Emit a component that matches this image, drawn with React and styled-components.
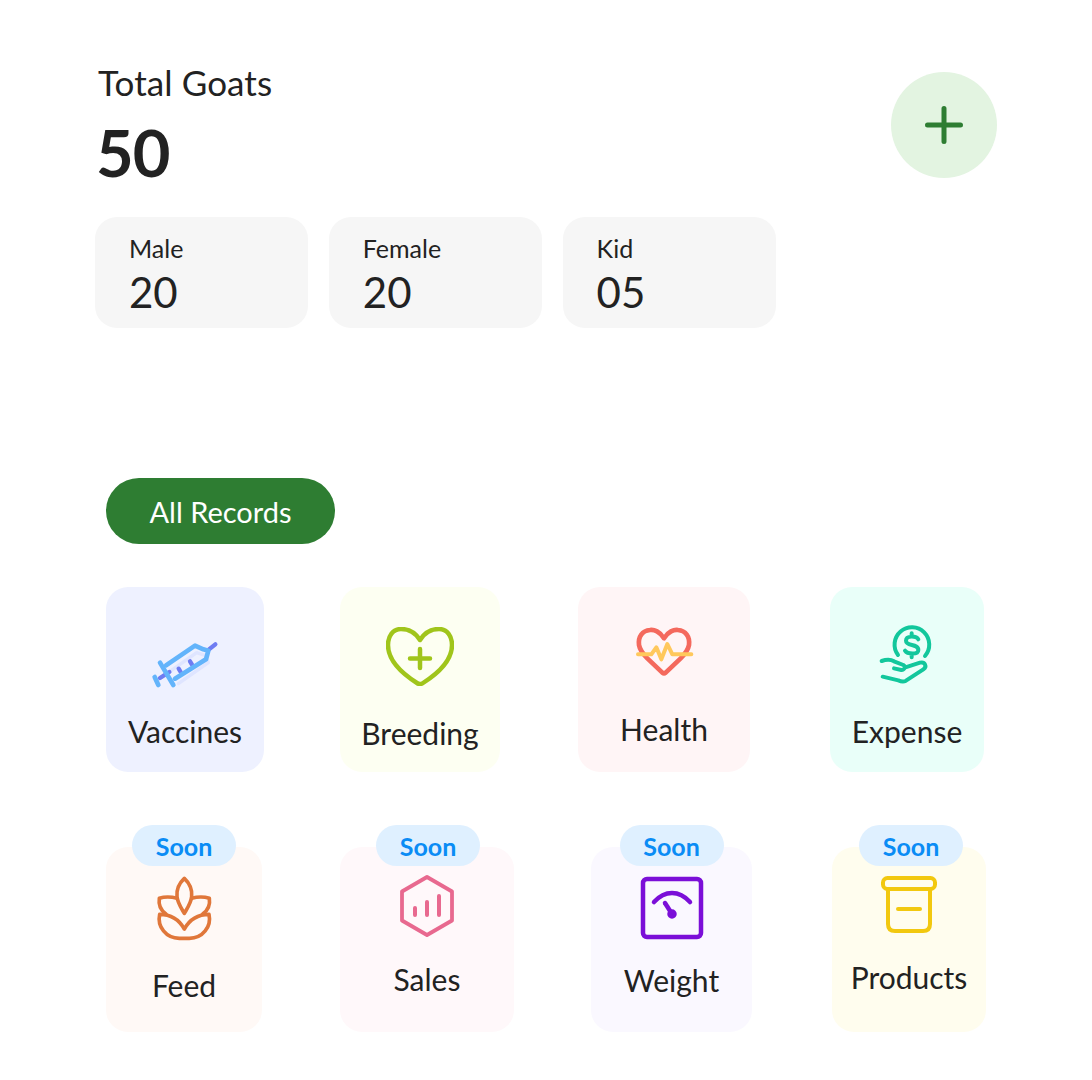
import React from 'react';
import styled, { createGlobalStyle } from 'styled-components';

const GlobalStyle = createGlobalStyle`
  html, body {
    margin: 0;
    padding: 0;
    background: #fff;
    font-family: 'Lato', 'Inter', sans-serif;
    color: #222;
  }
`;

const Page = styled.div`
  width: 1092px;
  height: 1080px;
  overflow: hidden;
  box-sizing: border-box;
`;

const Summary = styled.section`
  padding: 62px 95px 0;
`;

const SummaryHeader = styled.div`
  display: flex;
  justify-content: space-between;
  align-items: flex-start;
`;

const Title = styled.div`
  font-size: 35px;
  line-height: 40px;
  letter-spacing: 0.1px;
  padding-left: 3px;
`;

const TotalCount = styled.div`
  font-size: 65px;
  line-height: 72px;
  font-weight: 700;
  letter-spacing: -1px;
  margin-top: 14px;
  padding-left: 1px;
`;

const AddButton = styled.button`
  width: 106px;
  height: 106px;
  margin-top: 10px;
  padding: 0;
  border: 0;
  border-radius: 50%;
  background: #e3f4e1;
  display: flex;
  align-items: center;
  justify-content: center;
`;

const StatRow = styled.div`
  display: flex;
  gap: 20.5px;
  margin-top: 29px;
`;

const StatCard = styled.div`
  width: 213.3px;
  height: 111px;
  box-sizing: border-box;
  padding: 16px 34px 0;
  border-radius: 22px;
  background: #f6f6f6;
`;

const StatLabel = styled.div`
  font-size: 25px;
  line-height: 30px;
`;

const StatValue = styled.div`
  font-size: 42px;
  line-height: 46px;
  margin-top: 6px;
`;

const Records = styled.section`
  padding: 150px 0 0 106px;
`;

const RecordsButton = styled.button`
  width: 229px;
  height: 66px;
  padding: 0;
  border: 0;
  border-radius: 33px;
  background: #2e7d32;
  color: #fff;
  font-family: inherit;
  font-size: 29px;
`;

const CardRow = styled.div`
  display: flex;
  margin-top: ${props => props.$top}px;
`;

const Card = styled.div`
  position: relative;
  width: ${props => props.$width}px;
  height: 185px;
  margin-left: ${props => props.$gap}px;
  padding-top: ${props => props.$pad}px;
  box-sizing: border-box;
  border-radius: 22px;
  background: ${props => props.$bg};
  display: flex;
  flex-direction: column;
  align-items: center;
`;

const CardLabel = styled.div`
  margin-top: ${props => props.$gap}px;
  font-size: 30px;
  line-height: 36px;
`;

const SoonBadge = styled.span`
  position: absolute;
  top: -22px;
  left: 50%;
  transform: translateX(calc(-50% + ${props => props.$shift}px));
  width: 104px;
  height: 41px;
  border-radius: 21px;
  background: #dff0ff;
  color: #0a8cf5;
  font-size: 25px;
  font-weight: 700;
  line-height: 43px;
  text-align: center;
`;

const Icon = styled.svg`
  display: block;
  flex: none;
  fill: none;
  stroke-linecap: round;
  stroke-linejoin: round;
`;

const PlusIcon = () => (
  <Icon width="38" height="38" viewBox="0 0 38 38" stroke="#2e7d32" strokeWidth="5">
    <path d="M19 2.5V35.5M2.5 19H35.5" />
  </Icon>
);

const SyringeIcon = () => (
  <Icon width="90" height="70" viewBox="0 0 270 210">
    <g stroke="#dfe5ff" strokeWidth="10" transform="translate(5 6)">
      <path d="M85 118L165 62L190 70L200 92L110 155" />
    </g>
    <g stroke="#6f7cf2" strokeWidth="13">
      <path d="M60 144L88 126M207 58L226 43M116 116L122 126M150 94L156 104" />
    </g>
    <g stroke="#63b4fb" strokeWidth="14">
      <path d="M60 98L100 165M44 141L55 165" />
      <path d="M78 106L165 47L190 58L205 62L198 88L105 146" />
    </g>
  </Icon>
);

const HeartPlusIcon = () => (
  <Icon width="68" height="59" viewBox="0 0 68 59" stroke="#a0c51b" strokeWidth="4.5">
    <path d="M34 13C29 5 22 2 15 2C7 2 2 9 2 18C2 35 20 49 31 56Q34 58 37 56C48 49 66 35 66 18C66 9 61 2 53 2C46 2 39 5 34 13Z" />
    <path d="M34 22V41M24 31.5H44" />
  </Icon>
);

const PulseHeartIcon = () => (
  <Icon width="80" height="65" viewBox="0 0 240 195">
    <path
      stroke="#f4695d"
      strokeWidth="14"
      d="M120 55C108 35 90 28 78 30C55 32 42 50 45 75C48 92 60 105 70 115L115 158Q120 162 125 158L170 115C180 105 192 92 195 75C198 50 185 32 162 30C150 28 132 35 120 55Z"
    />
    <path stroke="#ffc85c" strokeWidth="12" d="M42 103H82L97 82L112 118L130 72L145 103H202" />
  </Icon>
);

const MoneyHandIcon = () => (
  <Icon width="75" height="70" viewBox="0 0 225 210" stroke="#12c79c" strokeWidth="12">
    <path d="M84 105A52 52 0 1 1 165 108" />
    <path d="M145 58C140 48 108 45 108 62C108 80 145 70 145 90C145 105 112 103 105 92M125 40V48M125 103V112" />
    <path d="M35 123C50 118 62 118 72 124L100 135C108 140 104 150 94 150L72 145M104 143L150 128C165 124 172 140 160 148L108 182C100 186 92 184 85 181L38 170" />
  </Icon>
);

const WheatIcon = () => (
  <Icon width="70" height="75" viewBox="-6 0 210 225" stroke="#e0773a" strokeWidth="11">
    <path d="M100 25C84 40 76 60 78 80C80 100 92 116 100 130C108 116 120 100 122 80C124 60 116 40 100 25Z" />
    <path d="M78 85C60 80 40 80 25 85C22 105 30 122 45 132M122 85C140 80 160 80 175 85C178 105 170 122 155 132" />
    <path d="M100 177C85 150 60 133 26 133C18 170 45 205 85 205H115C155 205 182 170 174 133C140 133 115 150 100 177Z" />
  </Icon>
);

const HexChartIcon = () => (
  <Icon width="54" height="62" viewBox="0 0 54 62" stroke="#e8698f" strokeWidth="3.8">
    <path d="M27 2L52 16.5V45.5L27 60L2 45.5V16.5Z" />
    <path d="M15 33V40M27 27V40M39 21V40" strokeWidth="4" />
  </Icon>
);

const ScaleIcon = () => (
  <Icon width="66" height="66" viewBox="0 0 66 66" stroke="#7b0fd8" strokeWidth="4.5">
    <rect x="4" y="4" width="58" height="58" rx="4" />
    <path d="M15 27C26 15 40 15 51 27" />
    <path d="M26 28L33 39" />
    <circle cx="33" cy="39" r="2.5" fill="#7b0fd8" />
  </Icon>
);

const BoxIcon = () => (
  <Icon width="60" height="60" viewBox="0 0 60 60" stroke="#f2c80f" strokeWidth="4">
    <rect x="4" y="4" width="52" height="11" rx="4.5" />
    <path d="M9 15V50Q9 57 16 57H44Q51 57 51 50V15" />
    <path d="M19 35H41" />
  </Icon>
);

const topCards = [
  { name: 'Vaccines', width: 158, gap: 0, pad: 43, labelGap: 13, bg: '#eef1ff', icon: <SyringeIcon /> },
  { name: 'Breeding', width: 160, gap: 76, pad: 40, labelGap: 29, bg: '#fdfff2', icon: <HeartPlusIcon /> },
  { name: 'Health', width: 172, gap: 78, pad: 33, labelGap: 26, bg: '#fff5f6', icon: <PulseHeartIcon /> },
  { name: 'Expense', width: 154, gap: 80, pad: 33, labelGap: 23, bg: '#e9fff9', icon: <MoneyHandIcon /> },
];

const soonCards = [
  { name: 'Feed', width: 156, gap: 0, pad: 23, labelGap: 22, bg: '#fff9f6', badgeShift: 0, icon: <WheatIcon /> },
  { name: 'Sales', width: 174, gap: 78, pad: 28, labelGap: 24, bg: '#fff8fa', badgeShift: 1, icon: <HexChartIcon /> },
  { name: 'Weight', width: 161, gap: 77, pad: 28, labelGap: 21, bg: '#faf8ff', badgeShift: 0, icon: <ScaleIcon /> },
  { name: 'Products', width: 154, gap: 80, pad: 27, labelGap: 25, bg: '#fffdee', badgeShift: 2, icon: <BoxIcon /> },
];

const stats = [
  { label: 'Male', value: '20' },
  { label: 'Female', value: '20' },
  { label: 'Kid', value: '05' },
];

const RecordCard = ({ card, soon }) => (
  <Card $width={card.width} $gap={card.gap} $pad={card.pad} $bg={card.bg}>
    {soon && <SoonBadge $shift={card.badgeShift}>Soon</SoonBadge>}
    {card.icon}
    <CardLabel $gap={card.labelGap}>{card.name}</CardLabel>
  </Card>
);

const App = () => (
  <Page>
    <GlobalStyle />
    <Summary>
      <SummaryHeader>
        <div>
          <Title>Total Goats</Title>
          <TotalCount>50</TotalCount>
        </div>
        <AddButton aria-label="Add goat">
          <PlusIcon />
        </AddButton>
      </SummaryHeader>
      <StatRow>
        {stats.map(stat => (
          <StatCard key={stat.label}>
            <StatLabel>{stat.label}</StatLabel>
            <StatValue>{stat.value}</StatValue>
          </StatCard>
        ))}
      </StatRow>
    </Summary>
    <Records>
      <RecordsButton>All Records</RecordsButton>
      <CardRow $top={43}>
        {topCards.map(card => (
          <RecordCard key={card.name} card={card} />
        ))}
      </CardRow>
      <CardRow $top={75}>
        {soonCards.map(card => (
          <RecordCard key={card.name} card={card} soon />
        ))}
      </CardRow>
    </Records>
  </Page>
);

export default App;
